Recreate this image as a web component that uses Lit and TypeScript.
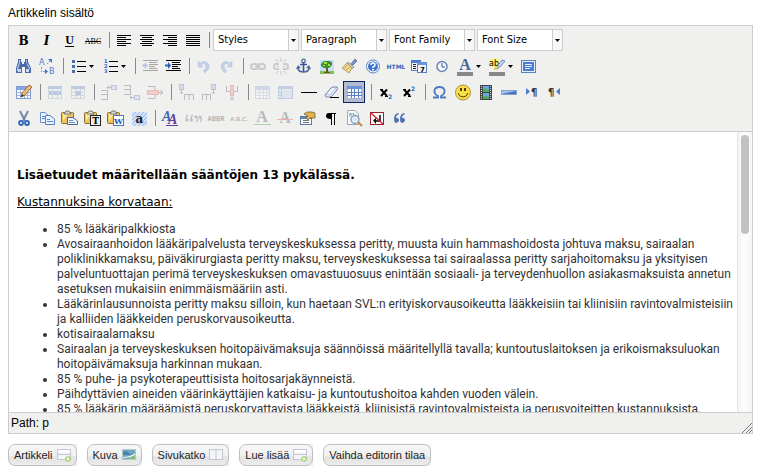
import { LitElement, html, css, svg, nothing } from "lit";
import type { SVGTemplateResult } from "lit";
import { customElement, property } from "lit/decorators.js";
import { classMap } from "lit/directives/class-map.js";

type Glyph = SVGTemplateResult;

const rows = (lines: number[][], color = "#000") =>
  lines.map(([x, y, w]) => svg`<rect x=${x} y=${y} width=${w} height="1" fill=${color} />`);

const serif = "DejaVu Serif, Liberation Serif, serif";
const sans = "DejaVu Sans, sans-serif";

const grid = svg`
  <rect x="3.500" y="4.500" width="14" height="12" fill="#fff" stroke="#7f9bd0" />
  <rect x="4" y="5" width="13" height="3" fill="#86a6e3" />
  <path d="M4 10.500H17M4 13.500H17M7.500 8V16M11.500 8V16M14.500 8V16" stroke="#9fb4de" />`;

const clipboard = svg`
  <rect x="2.500" y="4.500" width="12" height="11" rx="1" fill="#edc458" stroke="#8a7033" />
  <path d="M4 6H9L4 13Z" fill="#fbe9ac" />
  <path d="M5 6L7 3H10L12 6Z" fill="#ddd" stroke="#777" />`;

const binoculars = svg`
  <path d="M5 3H8V6H9V8H11V6H12V3H15V6L18 12V17H12V11H9V17H3V12L5 6Z" fill="#4a6ba6" />
  <path d="M6 4H7V7L5 13V15H4V12L6 7ZM13 4H14V7L17 12V14L14 9Z" fill="#b5ccf5" />
  <path d="M5 13H8V16H5ZM13 13H16V16H13Z" fill="#c9dafa" />`;

const indentLines = rows([[4, 4, 15], [10, 6, 8], [10, 8, 9], [10, 10, 6], [10, 12, 8], [4, 14, 15]]);

const glyphs: Record<string, Glyph> = {
  bold: svg`<text x="10.500" y="15" text-anchor="middle" font-family=${serif} font-weight="bold" font-size="12">B</text>`,
  italic: svg`<text x="10.500" y="15" text-anchor="middle" font-family=${serif} font-weight="bold" font-style="italic" font-size="12">I</text>`,
  underline: svg`<text x="10.500" y="14" text-anchor="middle" font-family="Liberation Serif, serif" font-weight="bold" font-size="12">U</text><rect x="6" y="16" width="9" height="1" />`,
  strike: svg`<text x="11" y="14" text-anchor="middle" font-family="Liberation Serif, serif" font-size="8">ABC</text><rect x="3" y="11" width="16" height="1" />`,
  left: svg`${rows([[4, 5, 14], [4, 7, 9], [4, 9, 14], [4, 11, 9], [4, 13, 14], [4, 15, 9]])}`,
  center: svg`${rows([[4, 5, 14], [6, 7, 10], [4, 9, 14], [6, 11, 10], [4, 13, 14], [6, 15, 10]])}`,
  right: svg`${rows([[4, 5, 14], [9, 7, 9], [4, 9, 14], [9, 11, 9], [4, 13, 14], [9, 15, 9]])}`,
  full: svg`${rows([[4, 5, 14], [4, 7, 14], [4, 9, 14], [4, 11, 14], [4, 13, 14], [4, 15, 14]])}`,
  find: binoculars,
  replace: svg`
    <text x="3" y="9" font-family=${sans} font-size="8" fill="#4f78cc">A</text>
    <text x="13" y="18" font-family=${sans} font-size="8" fill="#4f78cc">B</text>
    <path d="M5.500 11V15.500H10M11 8L15 4" fill="none" stroke="#7d9be0" stroke-dasharray="2 1" />
    <path d="M9 13L12 15.500L9 18ZM12 3H16V7Z" fill="#3f6fd1" />`,
  bullist: svg`<path d="M5 4H8V7H5ZM5 9H8V12H5ZM5 14H8V17H5Z" fill="#4f6da8" />
    ${rows([[10, 5, 9], [10, 10, 9], [10, 15, 9]])}`,
  numlist: svg`
    <g font-family=${sans} font-size="5" font-weight="bold" fill="#2f62c9"><text x="5" y="7">1</text><text x="5" y="12">2</text><text x="5" y="17">3</text></g>
    ${rows([[10, 5, 9], [10, 10, 9], [10, 15, 9]])}`,
  outdent: svg`${indentLines}<path d="M3 9.500L7 6V8.500H9V10.500H7V13Z" fill="#3f6fd1" />`,
  indent: svg`${indentLines}<path d="M9 9.500L6 6V8.500H3V10.500H6V13Z" fill="#2a5fc0" />`,
  undo: svg`<path d="M5 5V11H10L8 9Q12 6 13 10Q13 13 10 15L12 17Q17 13 16 9Q13 3 7 7Z" fill="#5b86d6" stroke="#3e66b5" stroke-width=".5" />`,
  redo: svg`<path d="M16 5V11H11L13 9Q9 6 8 10Q8 13 11 15L9 17Q4 13 5 9Q8 3 14 7Z" fill="#5b86d6" stroke="#3e66b5" stroke-width=".5" />`,
  link: svg`<g fill="none" stroke="#6f7b90" stroke-width="2"><rect x="4" y="8" width="7" height="5" rx="2.500" /><rect x="11" y="8" width="7" height="5" rx="2.500" /></g><path d="M8 10.500H14" stroke="#455" />`,
  unlink: svg`<g fill="none" stroke="#6f7b90" stroke-width="2"><path d="M9 8H6Q4 8 4 10.500T6 13H9M13 8H16Q18 8 18 10.500T16 13H13" /></g><path d="M11 2V6M6 3L8 6M16 3L14 6M11 15V19M6 18L8 15M16 18L14 15M7 10.500H9M13 10.500H15" stroke="#667" />`,
  anchor: svg`<circle cx="10.500" cy="5" r="1.800" fill="none" stroke="#4a689e" stroke-width="1.300" /><path d="M10.500 6V16M7 8.500H14" stroke="#35558f" stroke-width="1.600" /><path d="M5 11V13Q6 16 10.500 16T16 13V11" fill="none" stroke="#4a689e" stroke-width="1.600" /><path d="M3 13L5 9L8 12ZM18 13L16 9L13 12Z" fill="#4a689e" />`,
  image: svg`<rect x="4" y="4" width="14" height="14" fill="#c3def5" /><rect x="4" y="15" width="14" height="3" fill="#83c25a" />
    <path d="M10 10H12V16H14V17H8V16H10Z" fill="#7a4f21" /><path d="M5 8L8 5H13L16 6V9L13 12H8L5 10Z" fill="#3f8e28" /><path d="M8 6H11V8H8ZM12 8H14V10H12ZM7 9H9V10H7Z" fill="#a4dc52" />`,
  cleanup: svg`<path d="M12 8L16 3L18 5L14 9Z" fill="#7390c0" stroke="#4b6491" stroke-width=".7" /><path d="M9 6L15 11L13 13L8 8Z" fill="#ccc" stroke="#777" stroke-width=".7" /><path d="M8 7L13 12L10 17L3 12Q5 10 8 7Z" fill="#f3dc94" stroke="#a68b4b" stroke-width=".8" /><path d="M5 12L9 9M7 14L11 11" stroke="#c2a050" />`,
  help: svg`<circle cx="11" cy="10.500" r="6.500" fill="#fff" stroke="#5a80c4" /><circle cx="11" cy="10.500" r="5" fill="#3e76cf" /><path d="M9 9Q9 7 11 7T13 9Q13 10 11 11V12" fill="none" stroke="#fff" stroke-width="1.500" /><rect x="10" y="13" width="2" height="1.500" fill="#fff" />`,
  code: svg`<text x="11" y="13" text-anchor="middle" font-family=${sans} font-weight="bold" font-size="6" fill="#3263bd">HTML</text>`,
  date: svg`<rect x="3.500" y="4.500" width="9" height="10" fill="#f4f7fd" stroke="#5c7cba" /><rect x="3" y="4" width="10" height="3" fill="#4c7bd2" /><path d="M5 8.500H8M5 10.500H8M5 12.500H8" stroke="#222" />
    <rect x="9.500" y="6.500" width="9" height="10" fill="#f4f7fd" stroke="#5c7cba" /><rect x="9" y="6" width="10" height="3" fill="#6c93da" /><text x="12" y="16" font-size="7" font-weight="bold" font-family=${sans}>7</text>`,
  time: svg`<circle cx="11" cy="10.500" r="5" fill="#f5f9ff" stroke="#6a86b8" stroke-width="1.500" /><path d="M11 7V11H14" fill="none" stroke="#33569b" />`,
  forecolor: svg`<text x="11" y="14" text-anchor="middle" font-family="Liberation Serif, serif" font-weight="bold" font-size="16" fill="#47659f">A</text><rect x="3" y="16" width="16" height="4" fill="#888" />`,
  backcolor: svg`<rect x="3" y="3" width="10" height="8" fill="#fff27a" /><text x="3" y="10" font-family=${sans} font-size="8">ab</text><path d="M16 4L19 5L14 11L11 13L12 9Z" fill="#c4d5f3" stroke="#6378a3" stroke-width=".8" /><path d="M8 12.500H12" stroke="#d9c33a" stroke-width="2" /><rect x="3" y="16" width="16" height="4" fill="#888" />`,
  fullscreen: svg`<rect x="3.500" y="4.500" width="14" height="12" fill="#e9f0fc" stroke="#5f80bd" /><rect x="5" y="6" width="11" height="9" fill="#4b7bd3" /><path d="M7 8.500H14M7 10.500H14M7 12.500H12" stroke="#e5eeff" />`,
  table: svg`${grid}<path d="M8 15L9 11L16 3L19 5L12 13Z" fill="#eebb78" stroke="#87521c" stroke-width=".8" /><path d="M8 15L9 12L11 14Z" fill="#333" />`,
  rowprops: svg`<rect x="4.500" y="4.500" width="13" height="12" fill="#eef3fc" stroke="#8aa" /><rect x="4" y="4" width="14" height="3" fill="#5277bb" /><rect x="5" y="9" width="12" height="4" fill="#3f70ce" /><path d="M8.500 7V16M13.500 7V16" stroke="#89a" />`,
  cellprops: svg`<rect x="4.500" y="4.500" width="13" height="12" fill="#eef3fc" stroke="#8aa" /><rect x="4" y="4" width="14" height="3" fill="#5277bb" /><path d="M5 10H17M5 13.500H17M8.500 7V16M13.500 7V16" stroke="#89a" /><rect x="9" y="9" width="5" height="4" fill="#3f70ce" />`,
  rowbefore: svg`<path d="M3 8.500H10M3 12.500H10M3 17.500H10M9.500 8V18M13 5.500H9M11 3.500L9 5.500L11 7.500" fill="none" stroke="#445" /><rect x="13.500" y="3.500" width="5" height="4" fill="#b7cdf3" stroke="#3d68b5" />`,
  rowafter: svg`<path d="M3 3.500H10M3 7.500H10M3 12.500H10M9.500 3V13M9 15.500H13M11 13.500L9 15.500L11 17.500" fill="none" stroke="#445" /><rect x="13.500" y="13.500" width="5" height="4" fill="#b7cdf3" stroke="#3d68b5" />`,
  rowdelete: svg`<path d="M4 4.500H11V9M4 16.500H11V13M13 10.500H18M16 8L19 10.500L16 13" fill="none" stroke="#445" /><rect x="3.500" y="8.500" width="11" height="4" fill="#f08080" stroke="#c44" />`,
  colbefore: svg`<rect x="4.500" y="2.500" width="4" height="5" fill="#8fb0ea" stroke="#3d68b5" /><path d="M6.500 8V12M5 10.500L6.500 12L8 10.500M9.500 18V12.500H18.500V18M14 12V18" fill="none" stroke="#445" />`,
  colafter: svg`<rect x="13.500" y="2.500" width="4" height="5" fill="#8fb0ea" stroke="#3d68b5" /><path d="M15.500 8V12M14 10.500L15.500 12L17 10.500M4.500 18V12.500H12.500V18M8.500 12V18" fill="none" stroke="#445" />`,
  coldelete: svg`<path d="M5.500 4V9.500H9M16.500 4V9.500H13M11 13V18M9 16L11 18L13 16" fill="none" stroke="#445" /><rect x="9.500" y="3.500" width="3" height="10" fill="#f08080" stroke="#c44" />`,
  split: grid,
  merge: svg`<rect x="3.500" y="4.500" width="14" height="12" fill="#dbe6fb" stroke="#4d74be" /><rect x="3" y="4" width="15" height="3" fill="#5f86d0" /><path d="M6.500 7V16M4 10.500H6M4 13.500H6M10.500 4V7M14.500 4V7" stroke="#4d74be" /><rect x="7" y="8" width="10" height="8" fill="#b9cdf2" />`,
  hr: svg`<rect x="3" y="10" width="16" height="1" />`,
  removeformat: svg`<path d="M4 13L10 6Q11 5 13 5H16Q17 6 16 8L10 15H6Q4 15 4 13Z" fill="#eef3fb" stroke="#6d82a8" /><path d="M5 12.500L9 13L15 6" fill="none" stroke="#a9bbdb" /><rect x="9" y="15" width="9" height="1" />`,
  visualaid: svg`<rect x="3.500" y="4.500" width="14" height="12" fill="#fff" stroke="#86a2d4" stroke-dasharray="2 1" /><rect x="3" y="4" width="15" height="3" fill="#6d92da" /><path d="M3 10.500H18M3 13.500H18M7.500 7V16M10.500 7V16M14.500 7V16" stroke="#5c80c4" />`,
  sub: svg`<path d="M6 7.500L12 14M12 7.500L6 14" stroke="#000" stroke-width="2" /><path d="M5 7.500H8M10 14.500H13" stroke="#000" /><text x="13" y="17" font-family=${sans} font-size="6" font-weight="bold" fill="#2563c0">2</text>`,
  sup: svg`<path d="M6 7.500L12 14M12 7.500L6 14" stroke="#000" stroke-width="2" /><path d="M5 7.500H8M10 14.500H13" stroke="#000" /><text x="13" y="9" font-family=${sans} font-size="6" font-weight="bold" fill="#2563c0">2</text>`,
  charmap: svg`<path d="M4 15.500H9V14Q5 12 5.500 8.500Q6 5 10.500 5T15.500 8.500Q16 12 12 14V15.500H17" fill="none" stroke="#5079bf" stroke-width="1.800" />`,
  smiley: svg`<circle cx="11" cy="10.500" r="7.500" fill="#fbe044" stroke="#ad923a" /><path d="M9 6V9M13 6V9" stroke="#4c3a00" stroke-width="2" /><path d="M6 11Q7 15 11 15T16 11" fill="none" stroke="#5c4600" />`,
  media: svg`<rect x="5" y="3" width="12" height="15" fill="#444" /><path d="M6.500 4V18M15.500 4V18" stroke="#ddd" stroke-dasharray="1 1" /><rect x="8" y="4" width="6" height="6" fill="#6aa6e8" /><rect x="8" y="11" width="6" height="6" fill="#6aa6e8" /><path d="M8 8L11 6L14 9V10H8ZM8 15L11 13L14 16V17H8Z" fill="#49b058" />`,
  advhr: svg`<rect x="3.500" y="8.500" width="15" height="4" fill="#9fc0f2" stroke="#91a2bf" /><path d="M4 12L18 9V12Z" fill="#3c70c0" />`,
  ltr: svg`<path d="M5 6L9 9.500L5 13Z" fill="#4f7fcb" /><text x="10" y="14" font-family=${sans} font-weight="bold" font-size="10" fill="#333">¶</text>`,
  rtl: svg`<path d="M16 6L12 9.500L16 13Z" fill="#4f7fcb" /><text x="4" y="14" font-family=${sans} font-weight="bold" font-size="10" fill="#333">¶</text>`,
  cut: svg`<path d="M7 3L12 13M15 3L10 13" stroke="#7388ab" stroke-width="2" /><circle cx="8" cy="15" r="2" fill="none" stroke="#3467b8" stroke-width="1.800" /><circle cx="14" cy="15" r="2" fill="none" stroke="#3467b8" stroke-width="1.800" />`,
  copy: svg`<path d="M4.500 4.500H9L12.500 7.500V14.500H4.500Z" fill="#eef4ff" stroke="#6d90cc" /><path d="M9.500 7.500H14L18.500 11V16.500H9.500Z" fill="#eef4ff" stroke="#5580c6" /><path d="M6 8.500H9M6 10.500H9M11 11.500H14M11 13.500H17" stroke="#5486d8" />`,
  paste: svg`${clipboard}<path d="M8.500 9.500H14L18.500 13V16.500H8.500Z" fill="#edf2fb" stroke="#4d6794" /><path d="M10 12.500H14M10 14.500H16" stroke="#688dc9" />`,
  pastetext: svg`${clipboard}<rect x="8.500" y="7.500" width="10" height="10" fill="#eee" stroke="#222" /><text x="13.500" y="16" text-anchor="middle" font-family=${serif} font-weight="bold" font-size="9">T</text>`,
  pasteword: svg`${clipboard}<rect x="8.500" y="7.500" width="10" height="10" fill="#fff" stroke="#4d77bd" /><text x="13.500" y="16" text-anchor="middle" font-family=${serif} font-weight="bold" font-size="8" fill="#2058b8">W</text>`,
  selectall: svg`<rect x="4" y="4" width="15" height="14" fill="#d3e1fb" /><path d="M4 8L8 4M4 12L12 4M4 16L16 4M6 18L19 5M10 18L19 9M14 18L19 13" stroke="#9bb9ef" /><text x="11.500" y="15" text-anchor="middle" font-family=${serif} font-weight="bold" font-size="12" fill="#222">a</text>`,
  styleprops: svg`<text x="3" y="13" font-family="Liberation Serif, serif" font-style="italic" font-weight="bold" font-size="14" fill="#3c68b7">A</text><text x="9" y="16" font-family="Liberation Serif, serif" font-style="italic" font-weight="bold" font-size="14" fill="#5c3f9c">A</text><rect x="7" y="17" width="12" height="1" fill="#5c3f9c" />`,
  cite: svg`<g fill="none" stroke="#345" stroke-width="1.200"><path d="M6 7Q4 8 4 11M11 7Q9 8 9 11M14 14Q16 13 16 10M18 14Q20 13 19 10" /></g><g fill="#345"><circle cx="5" cy="12" r="1.500" /><circle cx="9.500" cy="12" r="1.500" /><circle cx="14" cy="9" r="1.500" /><circle cx="18" cy="9" r="1.500" /></g>`,
  abbr: svg`<text x="11" y="13" text-anchor="middle" font-family="Liberation Mono, monospace" font-weight="bold" font-size="7" fill="#234">ABBR</text>`,
  acronym: svg`<text x="11" y="13" text-anchor="middle" font-family="Liberation Sans, sans-serif" font-weight="bold" font-size="6" fill="#234">A.B.C.</text>`,
  ins: svg`<text x="11" y="14" text-anchor="middle" font-family="Liberation Serif, serif" font-weight="bold" font-size="16" fill="#345">A</text><rect x="3" y="16" width="17" height="1" fill="#179b1e" />`,
  del: svg`<text x="11" y="15" text-anchor="middle" font-family="Liberation Serif, serif" font-weight="bold" font-size="16" fill="#345">A</text><rect x="3" y="11" width="16" height="1" fill="#e02020" />`,
  attribs: svg`<rect x="3.500" y="8.500" width="11" height="8" fill="#fff" stroke="#5f76a0" /><rect x="4" y="9" width="10" height="2" fill="#5b86cf" /><path d="M6 12.500H12M6 14.500H12" stroke="#678" /><path d="M7 6L10 4H15L18 5V10H13L11 12L9 10L11 8Z" fill="#dfb254" stroke="#765d2a" stroke-width=".8" />`,
  visualchars: svg`<path d="M9 5H16V6H15V17H14V6H12V17H11V11Q6 11 6 8T9 5Z" />`,
  preview: svg`<path d="M4.500 2.500H12L15.500 6V16.500H4.500Z" fill="#f7faff" stroke="#9aa7bd" /><text x="6" y="9" font-family=${sans} font-size="5" fill="#446">P1</text><circle cx="12" cy="11.500" r="4" fill="#dcebfc" stroke="#8c9ab2" stroke-width="1.300" /><path d="M15 14L19 18" stroke="#c08b3c" stroke-width="2" />`,
  nonbreaking: svg`<rect x="4.500" y="4.500" width="13" height="12" fill="#fff" stroke="#9c2230" /><path d="M14 7V13H9" fill="none" stroke="#000" stroke-width="1.500" /><path d="M7 12.500L10 10V16Z" /><path d="M5 5L17 16" stroke="#d41b2c" stroke-width="1.300" />`,
  blockquote: svg`<path d="M10 6Q7 7 7 10H8Q10 10 10 12T7.500 15Q5 15 5 11Q5 6 9 5ZM16 6Q13 7 13 10H14Q16 10 16 12T13.500 15Q11 15 11 11Q11 6 15 5Z" fill="#4a74b5" />`,
};

interface Tool {
  id?: string;
  label?: string;
  split?: boolean;
  off?: boolean;
  on?: boolean;
  select?: string;
}

const SEP: Tool = {};
const t = (id: string, label: string, extra: Tool = {}): Tool => ({ id, label, ...extra });
const off = { off: true };
const split = { split: true };

const toolbar: Tool[][] = [
  [
    t("bold", "Bold"), t("italic", "Italic"), t("underline", "Underline"), t("strike", "Strikethrough"), SEP,
    t("left", "Align left"), t("center", "Align center"), t("right", "Align right"), t("full", "Align full"), SEP,
    { select: "Styles" }, { select: "Paragraph" }, { select: "Font Family" }, { select: "Font Size" },
  ],
  [
    t("find", "Find"), t("replace", "Find/Replace"), SEP,
    t("bullist", "Unordered list", split), t("numlist", "Ordered list", split), SEP,
    t("outdent", "Outdent", off), t("indent", "Indent"), SEP,
    t("undo", "Undo", off), t("redo", "Redo", off), SEP,
    t("link", "Insert link", off), t("unlink", "Unlink", off), t("anchor", "Insert anchor"), t("image", "Insert image"),
    t("cleanup", "Cleanup messy code"), t("help", "Help"), t("code", "Edit HTML source"),
    t("date", "Insert date"), t("time", "Insert time"),
    t("forecolor", "Text color", split), t("backcolor", "Background color", split), t("fullscreen", "Fullscreen"),
  ],
  [
    t("table", "Insert table"), SEP,
    t("rowprops", "Row properties", off), t("cellprops", "Cell properties", off), SEP,
    t("rowbefore", "Insert row before", off), t("rowafter", "Insert row after", off), t("rowdelete", "Delete row", off), SEP,
    t("colbefore", "Insert column before", off), t("colafter", "Insert column after", off), t("coldelete", "Delete column", off), SEP,
    t("split", "Split cells", off), t("merge", "Merge cells", off), t("hr", "Horizontal ruler"),
    t("removeformat", "Remove formatting"), t("visualaid", "Toggle guidelines", { on: true }), SEP,
    t("sub", "Subscript"), t("sup", "Superscript"), SEP,
    t("charmap", "Insert custom character"), t("smiley", "Emotions"), t("media", "Insert media"),
    t("advhr", "Horizontal rule"), t("ltr", "Left to right"), t("rtl", "Right to left"),
  ],
  [
    t("cut", "Cut"), t("copy", "Copy"), t("paste", "Paste"), t("pastetext", "Paste as plain text"),
    t("pasteword", "Paste from Word"), t("selectall", "Select all"), SEP,
    t("styleprops", "Edit CSS style"), t("cite", "Citation", off), t("abbr", "Abbreviation", off),
    t("acronym", "Acronym", off), t("ins", "Insertion", off), t("del", "Deletion", off),
    t("attribs", "Attributes"), t("visualchars", "Visual characters"), t("preview", "Preview"),
    t("nonbreaking", "Non-breaking space"), t("blockquote", "Blockquote"),
  ],
];

@customElement("tool-button")
class ToolButton extends LitElement {
  @property({ attribute: false }) tool!: Tool;

  static styles = css`
    :host { display: flex; margin-right: 1px; }
    .btn {
      display: flex; box-sizing: border-box; height: 22px; padding: 0;
      border: 1px solid transparent; background: none; align-items: center;
    }
    .on { border-color: #0a246a; background: #b2bbd0; }
    .icon { display: block; width: 20px; height: 20px; }
    .off .icon { opacity: 0.3; }
    .arrow { display: block; width: 9px; height: 20px; }
  `;

  render() {
    const { id = "", label = "", off, on, split } = this.tool;
    return html`<button type="button" class=${classMap({ btn: true, on: !!on, off: !!off })}
      aria-label=${label} ?disabled=${!!off}>
      <svg class="icon" viewBox="0 0 20 20" aria-hidden="true">${glyphs[id]}</svg>
      ${split ? html`<svg class="arrow" viewBox="0 0 9 20" aria-hidden="true"><path d="M2 9H7L4.500 12Z" /></svg>` : nothing}
    </button>`;
  }
}

@customElement("tool-select")
class ToolSelect extends LitElement {
  @property() label = "";

  static styles = css`
    :host { display: block; margin: 0 1px; }
    .box { display: grid; grid-template-columns: 75px 11px; }
    .list {
      grid-area: 1 / 1 / 2 / 3; box-sizing: border-box; height: 22px; margin: 0; padding: 0 12px 0 4px;
      border: 1px solid #ccc; border-radius: 0; appearance: none; background: #fff; color: #000;
      font: 11px/20px "DejaVu Sans Condensed", "Noto Sans", sans-serif;
    }
    .arrow {
      grid-area: 1 / 2; width: 11px; height: 20px; margin: 1px 0; box-sizing: border-box;
      border: solid #ccc; border-width: 0 1px; background: #f7f7f6; pointer-events: none; z-index: 1;
    }
  `;

  render() {
    return html`<div class="box">
      <select class="list" aria-label=${this.label}><option>${this.label}</option></select>
      <svg class="arrow" viewBox="0 0 9 20" aria-hidden="true"><path d="M2 9H7L4.500 12Z" /></svg>
    </div>`;
  }
}

const pageIcon = svg`<rect x=".5" y="1.500" width="13" height="10" fill="#f4f5f8" stroke="#c3c7d1" /><rect x="1" y="2" width="12" height="2" fill="#fff" /><path d="M1 6.500H13" stroke="#c3c7d1" />
  <circle cx="11" cy="11" r="2.800" fill="#9bcf5c" /><path d="M11 9V13M9 11H13" stroke="#fff" />`;

const actions: { text: string; icon?: Glyph }[] = [
  { text: "Artikkeli", icon: pageIcon },
  {
    text: "Kuva",
    icon: svg`<rect x=".5" y="1.500" width="13" height="10" fill="#6ea8c4" stroke="#b9c6cf" /><path d="M1 4Q5 2 7 5T13 4V7H1Z" fill="#4585a6" /><path d="M1 9Q8 9 13 5V7Q9 10 1 10Z" fill="#e9f3f5" /><path d="M4 11Q10 10 13 7V11Z" fill="#7cc45c" />`,
  },
  { text: "Sivukatko", icon: svg`<rect x=".5" y="1.500" width="13" height="10" fill="#f4f5f8" stroke="#c3c7d1" /><path d="M7 2V11" stroke="#c3c7d1" />` },
  { text: "Lue lisää", icon: pageIcon },
  { text: "Vaihda editorin tilaa" },
];

const benefits: string[][] = [
  ["85 % lääkäripalkkiosta"],
  [
    "Avosairaanhoidon lääkäripalvelusta terveyskeskuksessa peritty, muusta kuin hammashoidosta johtuva maksu, sairaalan",
    "poliklinikkamaksu, päiväkirurgiasta peritty maksu, terveyskeskuksessa tai sairaalassa peritty sarjahoitomaksu ja yksityisen",
    "palveluntuottajan perimä terveyskeskuksen omavastuuosuus enintään sosiaali- ja terveydenhuollon asiakasmaksuista annetun",
    "asetuksen mukaisiin enimmäismääriin asti.",
  ],
  [
    "Lääkärinlausunnoista peritty maksu silloin, kun haetaan SVL:n erityiskorvausoikeutta lääkkeisiin tai kliinisiin ravintovalmisteisiin",
    "ja kalliiden lääkkeiden peruskorvausoikeutta.",
  ],
  ["kotisairaalamaksu"],
  [
    "Sairaalan ja terveyskeskuksen hoitopäivämaksuja säännöissä määritellyllä tavalla; kuntoutuslaitoksen ja erikoismaksuluokan",
    "hoitopäivämaksuja harkinnan mukaan.",
  ],
  ["85 % puhe- ja psykoterapeuttisista hoitosarjakäynneistä."],
  ["Päihdyttävien aineiden väärinkäyttäjien katkaisu- ja kuntoutushoitoa kahden vuoden välein."],
  ["85 % lääkärin määräämistä peruskorvattavista lääkkeistä, kliinisistä ravintovalmisteista ja perusvoiteitten kustannuksista."],
];

@customElement("app-root")
class AppRoot extends LitElement {
  static styles = css`
    :host { display: block; padding: 4px 10px 8px 8px; background: #fff; color: #000; font: 12px/18px "Liberation Sans", Arial, sans-serif; }
    .label { display: block; margin-bottom: 3px; }
    .editor { border: 1px solid #ccc; }
    .tools { display: flex; flex-direction: column; gap: 4px; padding: 3px 3px 2px; background: #f0f0ee; border-bottom: 1px solid #ccc; }
    .row { display: flex; height: 22px; align-items: center; }
    .sep { width: 1px; height: 16px; margin: 0 2px 0 5px; background: #888; }
    .pane { display: flex; height: 280px; }
    .doc {
      flex: 1; min-width: 0; box-sizing: border-box; padding: 9px 8px 0; overflow: hidden; outline: none;
      font: 12px/15px "DejaVu Sans", Verdana, sans-serif;
    }
    .para { margin: 0 0 12px; min-height: 15px; }
    .items { margin: 0; padding-left: 40px; color: #333; font-family: Roboto, "Noto Sans", sans-serif; white-space: nowrap; }
    .track { flex: none; width: 15px; box-sizing: border-box; padding: 3px; border-left: 1px solid #e4e4e4; background: linear-gradient(to right, #f4f4f4, #fdfdfd 40%, #f6f6f6); }
    .thumb { width: 8px; height: 99px; border-radius: 4px; background: #c2c2c2; }
    .status { display: flex; justify-content: space-between; align-items: flex-end; height: 20px; padding-left: 2px; background: #f0f0ee; border-top: 1px solid #ccc; line-height: 20px; }
    .grip { width: 11px; height: 11px; display: block; }
    .actions { display: flex; flex-wrap: wrap; gap: 10px; margin-top: 10px; }
    .slot { background: linear-gradient(to right, transparent 50%, #eee 50%); }
    .action {
      display: flex; align-items: center; gap: 4px; box-sizing: border-box; height: 22px; padding: 0 5px;
      border: 1px solid #bfbfbf; border-radius: 7px; color: #222;
      background: linear-gradient(#f7f7f7, #f0f0f0 55%, #e2e2e2 60%, #ececec);
      font: 11px/20px "Liberation Sans", Arial, sans-serif; white-space: nowrap;
    }
    .pic { width: 14px; height: 14px; display: block; }
  `;

  render() {
    return html`
      <label class="label" id="content-label">Artikkelin sisältö</label>
      <div class="editor">
        <div class="tools" role="toolbar">
          ${toolbar.map((row) => html`<div class="row">${row.map((tool) =>
            tool.select ? html`<tool-select label=${tool.select}></tool-select>`
            : tool.id ? html`<tool-button .tool=${tool}></tool-button>`
            : html`<span class="sep"></span>`)}</div>`)}
        </div>
        <div class="pane">
          <div class="doc" contenteditable="true" role="textbox" aria-multiline="true" aria-labelledby="content-label" spellcheck="false">
            <p class="para"></p>
            <p class="para"><strong>Lisäetuudet määritellään sääntöjen 13 pykälässä.</strong></p>
            <p class="para"><u>Kustannuksina korvataan:</u></p>
            <ul class="items">
              ${benefits.map((lines) => html`<li>${lines.map((line, i) => html`${i ? html`<br />` : nothing}${line}`)}</li>`)}
            </ul>
          </div>
          <div class="track"><div class="thumb"></div></div>
        </div>
        <div class="status">
          <span>Path: p</span>
          <svg class="grip" viewBox="0 0 11 11" aria-hidden="true"><path d="M1 11L11 1M5 11L11 5M8 11L11 8" stroke="#777" /></svg>
        </div>
      </div>
      <div class="actions">
        ${actions.map(({ text, icon }) => html`<div class="slot"><button type="button" class="action">${text}
          ${icon ? html`<svg class="pic" viewBox="0 0 14 14" aria-hidden="true">${icon}</svg>` : nothing}</button></div>`)}
      </div>
    `;
  }
}
